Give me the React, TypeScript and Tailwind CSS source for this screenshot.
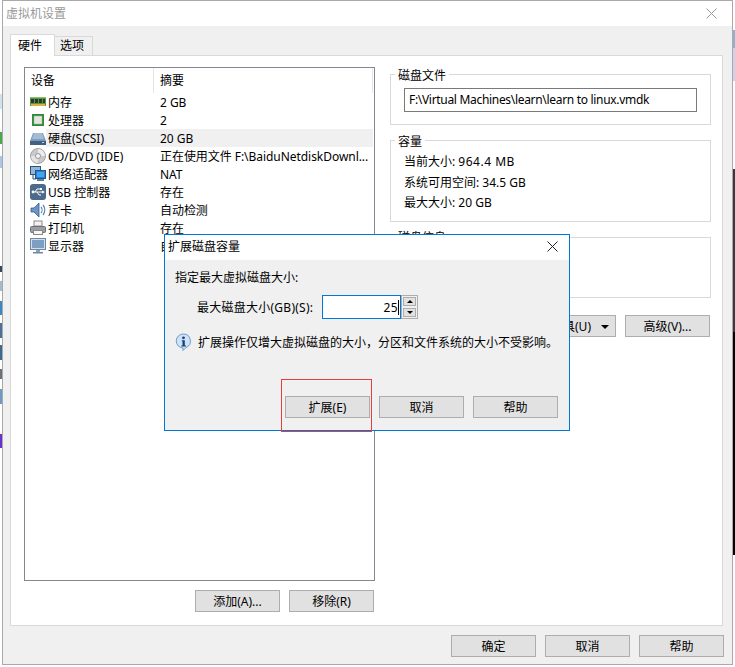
import React from 'react';

const MemoryIcon = () => (
  <svg width="16" height="16" viewBox="0 0 16 16">
    <rect x="0" y="3" width="16" height="9" fill="#4f9a3c" />
    <rect x="0" y="3" width="16" height="1" fill="#8cc46c" />
    <rect x="1" y="5" width="3" height="4" fill="#333" />
    <rect x="5" y="5" width="3" height="4" fill="#333" />
    <rect x="9" y="5" width="3" height="4" fill="#333" />
    <rect x="13" y="5" width="2" height="4" fill="#333" />
    <rect x="1" y="10" width="14" height="2" fill="#d8b340" />
  </svg>
);

const CpuIcon = () => (
  <svg width="16" height="16" viewBox="0 0 16 16">
    <rect x="2" y="2" width="12" height="12" fill="#2f8a3e" />
    <rect x="4" y="4" width="8" height="8" fill="#e4e6dc" stroke="#9fb59f" strokeWidth="0.5" />
  </svg>
);

const DiskIcon = () => (
  <svg width="16" height="16" viewBox="0 0 16 16">
    <path d="M3 3h10l3 8H0z" fill="#7d9cbc" />
    <path d="M4 3h8l2 6H2z" fill="#a3bbd3" />
    <rect x="0" y="11" width="16" height="4" fill="#3f5f83" />
    <rect x="12" y="12" width="2" height="1" fill="#b9d2ea" />
  </svg>
);

const CdIcon = () => (
  <svg width="16" height="16" viewBox="0 0 16 16">
    <circle cx="8" cy="8" r="7.5" fill="#c9c9c9" stroke="#a2a2a2" />
    <path d="M8 1a7 7 0 0 1 7 7H11a3 3 0 0 0-3-3z" fill="#ececec" />
    <path d="M8 15a7 7 0 0 1-7-7h4a3 3 0 0 0 3 3z" fill="#e4e4e4" />
    <circle cx="8" cy="8" r="2.5" fill="#f4f4f4" stroke="#9a9a9a" />
  </svg>
);

const NetworkIcon = () => (
  <svg width="16" height="16" viewBox="0 0 16 16">
    <rect x="0.5" y="0.5" width="10" height="8" fill="#8fb6dc" stroke="#2f5378" />
    <path d="M3 9v4h3" fill="none" stroke="#2f5378" />
    <rect x="5.5" y="4.5" width="10" height="8" fill="#1f84e0" stroke="#2f5378" />
    <rect x="7" y="6" width="7" height="5" fill="#42a5f0" />
    <rect x="7" y="13" width="7" height="2" fill="#5f7f9f" />
  </svg>
);

const UsbIcon = () => (
  <svg width="16" height="16" viewBox="0 0 16 16">
    <rect x="0" y="0" width="16" height="16" rx="3" fill="#4b6a8c" />
    <path d="M2 8h11M5 8l2-3h3M7 8l2 3h2" fill="none" stroke="#fff" strokeWidth="1" />
    <circle cx="3" cy="8" r="1.4" fill="#fff" />
    <path d="M12 6.5l3 1.5-3 1.5z" fill="#fff" />
    <rect x="10" y="4" width="2" height="2" fill="#fff" />
  </svg>
);

const SoundIcon = () => (
  <svg width="16" height="16" viewBox="0 0 16 16">
    <path d="M1 6h3l5-5v14l-5-5H1z" fill="#6f95c4" stroke="#2f5c92" strokeWidth="0.8" />
    <path d="M11 5c1.4 1.6 1.4 4.4 0 6M13 3c2.4 2.8 2.4 7.2 0 10" fill="none" stroke="#5b87bc" strokeWidth="1.2" />
  </svg>
);

const PrinterIcon = () => (
  <svg width="16" height="16" viewBox="0 0 16 16">
    <rect x="4" y="1" width="8" height="5" fill="#f2f2f2" stroke="#8a8a8a" />
    <rect x="0.5" y="6.5" width="15" height="6" rx="1" fill="#9a9ea4" stroke="#6d7076" />
    <rect x="3.5" y="10.5" width="9" height="4" fill="#f6f6f6" stroke="#8a8a8a" />
  </svg>
);

const MonitorIcon = () => (
  <svg width="16" height="16" viewBox="0 0 16 16">
    <rect x="0.5" y="0.5" width="15" height="11" fill="#d4dfeb" stroke="#6d89a6" />
    <rect x="2" y="2" width="12" height="8" fill="#7d9fc2" />
    <rect x="6" y="12" width="4" height="2" fill="#8ea3b8" />
    <rect x="3" y="14" width="10" height="1.5" fill="#6d89a6" />
  </svg>
);

const InfoIcon = () => (
  <svg width="17" height="18" viewBox="0 0 17 18">
    <path d="M8.5 1a7 7 0 0 1 2.5 13.5L8 17.5v-2.5A7 7 0 0 1 8.5 1z" fill="#cfe2f6" stroke="#6f9bcc" />
    <circle cx="8.5" cy="4.8" r="1.4" fill="#123f80" />
    <path d="M6.8 7.2h3v5.2H11v1.1H6.3v-1.1h1.2V8.3H6.8z" fill="#123f80" />
  </svg>
);

const devices = [
  { icon: <MemoryIcon />, name: '内存', summary: '2 GB' },
  { icon: <CpuIcon />, name: '处理器', summary: '2' },
  { icon: <DiskIcon />, name: '硬盘(SCSI)', summary: '20 GB', selected: true },
  { icon: <CdIcon />, name: 'CD/DVD (IDE)', summary: '正在使用文件 F:\\BaiduNetdiskDownl...' },
  { icon: <NetworkIcon />, name: '网络适配器', summary: 'NAT' },
  { icon: <UsbIcon />, name: 'USB 控制器', summary: '存在' },
  { icon: <SoundIcon />, name: '声卡', summary: '自动检测' },
  { icon: <PrinterIcon />, name: '打印机', summary: '存在' },
  { icon: <MonitorIcon />, name: '显示器', summary: '自动检测' },
];

const leftStrip = [
  'h-[95px] bg-white',
  'h-[16px] bg-[#cfe2f2]',
  'h-[23px] bg-white',
  'h-[12px] bg-[#4aa84a]',
  'h-[12px] bg-white',
  'h-[12px] bg-[#a8c8e8]',
  'h-[100px] bg-white',
  'h-[6px] bg-[#38485a]',
  'h-[9px] bg-white',
  'h-[10px] bg-[#a8b8c8]',
  'h-[11px] bg-white',
  'h-[14px] bg-[#3c86c4]',
  'h-[8px] bg-white',
  'h-[15px] bg-[#4c7098]',
  'h-[7px] bg-white',
  'h-[15px] bg-[#41688f]',
  'h-[10px] bg-white',
  'h-[10px] bg-[#6a7078]',
  'h-[10px] bg-white',
  'h-[15px] bg-[#6f9ac4]',
  'h-[30px] bg-white',
  'h-[15px] bg-[#6a2fd0]',
  'h-[222px] bg-white',
];

const rightStrip = [
  'h-[30px] bg-white',
  'h-[18px] bg-[#8fb0d0]',
  'h-[33px] bg-[#c8d4ec]',
  'h-[88px] bg-white',
  'h-[163px] bg-[#3a3a3a]',
  'h-[223px] bg-black',
  'h-[112px] bg-white',
];

const Btn: React.FC<{ children: React.ReactNode; className?: string }> = ({ children, className }) => (
  <button className={`h-[22px] w-[85px] border border-[#adadad] bg-[#e1e1e1] pt-px text-[12px] leading-[19px] text-black ${className ?? ''}`}>
    {children}
  </button>
);

const CloseX: React.FC<{ color: string }> = ({ color }) => (
  <svg width="11" height="11" viewBox="0 0 11 11">
    <path d="M0.5 0.5l10 10M10.5 0.5l-10 10" stroke={color} strokeWidth="1" fill="none" />
  </svg>
);

const App: React.FC = () => {
  return (
    <div className="relative flex h-[667px] w-[735px] overflow-hidden bg-white font-['Noto_Sans','Noto_Sans_CJK_SC',sans-serif] text-[12px] text-black">
      <div className="flex h-full w-[2px] flex-col">
        {leftStrip.map((cls, i) => (
          <div key={i} className={cls} />
        ))}
      </div>

      {/* main settings window */}
      <div className="flex h-[665px] w-[731px] flex-col border border-[#a9a9a9] bg-[#f0f0f0]">
        <div className="flex h-[25px] items-center justify-between bg-white pl-[3px] pr-[15px]">
          <span className="text-[12px] text-[#999999]">虚拟机设置</span>
          <CloseX color="#999999" />
        </div>

        <div className="ml-[7px] mt-[7px] flex h-[22px] items-end">
          <div className="relative z-10 -mb-px flex h-[22px] w-[45px] items-center border border-b-0 border-[#d9d9d9] bg-white pl-[7px]">
            硬件
          </div>
          <div className="flex h-[19px] w-[38px] items-center border border-l-0 border-b-0 border-[#d9d9d9] bg-[#f0f0f0] pl-[5px]">
            选项
          </div>
        </div>

        <div className="ml-[7px] flex h-[571px] w-[713px] border border-[#d9d9d9] bg-white pl-[13px] pt-[11px]">
          <div className="flex w-[351px] flex-col">
            <div className="flex h-[514px] flex-col border border-[#828790] bg-white">
              <div className="flex h-[25px] items-center">
                <span className="w-[128px] pl-[6px] pt-px">设备</span>
                <div className="flex h-full flex-1 items-center border-l border-[#e5e5e5] pl-[6px] pt-px">摘要</div>
                <div className="h-full w-[2px] border-l border-[#e5e5e5]" />
              </div>
              {devices.map((d) => (
                <div key={d.name} className="flex h-[18px] items-center">
                  <div className="flex w-[21px] shrink-0 justify-end">{d.icon}</div>
                  <div className={`mr-[1px] flex h-full flex-1 items-center pl-[2px] pt-px ${d.selected ? 'bg-[#f0f0f0]' : ''}`}>
                    <span className="w-[112px] whitespace-nowrap">{d.name}</span>
                    <span className="whitespace-nowrap tracking-[-0.05px]">{d.summary}</span>
                  </div>
                </div>
              ))}
            </div>
            <div className="mt-[9px] flex justify-end gap-[9px] pr-[1px]">
              <Btn>添加(A)...</Btn>
              <Btn>移除(R)</Btn>
            </div>
          </div>

          <div className="ml-[15px] flex w-[321px] flex-col pt-[7px]">
            <div className="h-[51px] border border-[#d9d9d9]">
              <div className="-mt-[8px] ml-[4px] h-[16px] w-fit bg-white px-[3px] leading-[18px]">磁盘文件</div>
              <div className="ml-[13px] mt-[5px] flex h-[24px] w-[293px] items-center border border-[#7a7a7a] pb-px pl-[4px] tracking-[-0.31px]">
                F:\Virtual Machines\learn\learn to linux.vmdk
              </div>
            </div>

            <div className="mt-[15px] h-[82px] border border-[#d9d9d9]">
              <div className="-mt-[8px] ml-[4px] h-[16px] w-fit bg-white px-[3px] leading-[18px]">容量</div>
              <div className="ml-[13px] mt-[3px] flex flex-col leading-[20.5px]">
                <span>
                  当前大小: <span className="tracking-[0.5px]">964.4 MB</span>
                </span>
                <span>系统可用空间: 34.5 GB</span>
                <span>最大大小: 20 GB</span>
              </div>
            </div>

            <div className="mt-[15px] h-[61px] border border-[#d9d9d9]">
              <div className="-mt-[8px] ml-[4px] h-[16px] w-fit bg-white px-[3px] leading-[16px]">磁盘信息</div>
            </div>

            <div className="mt-[17px] flex justify-end gap-[9px] pr-[1px]">
              <Btn>
                <span className="flex items-center justify-end gap-[10px] whitespace-nowrap pr-[6px]">
                  <span className="shrink-0">实用工具(U)</span>
                  <span className="h-0 w-0 shrink-0 border-x-[4px] border-t-[4px] border-x-transparent border-t-black" />
                </span>
              </Btn>
              <Btn>高级(V)...</Btn>
            </div>
          </div>
        </div>

        <div className="mt-[9px] flex justify-end gap-[9px] pr-[8px]">
          <Btn>确定</Btn>
          <Btn>取消</Btn>
          <Btn>帮助</Btn>
        </div>
      </div>

      <div className="flex h-full w-[2px] flex-col">
        {rightStrip.map((cls, i) => (
          <div key={i} className={cls} />
        ))}
      </div>

      {/* expand disk dialog */}
      <div className="absolute left-[164px] top-[234px] flex h-[197px] w-[406px] flex-col border border-[#0078d7] bg-[#f0f0f0]">
        <div className="flex h-[25px] items-center justify-between bg-white pb-[2px] pl-[3px] pr-[11px]">
          <span>扩展磁盘容量</span>
          <CloseX color="#222222" />
        </div>
        <div className="flex flex-1 flex-col pl-[10px] pr-[11px] pt-[10px]">
          <div className="leading-[16px]">指定最大虚拟磁盘大小:</div>
          <div className="ml-[22px] mt-[9px] flex h-[24px] items-center">
            <span className="w-[125px] whitespace-nowrap pt-[2px] tracking-[0.25px]">最大磁盘大小(GB)(S):</span>
            <div className="flex h-[24px] w-[79px] items-center justify-end border border-[#0078d7] bg-white pr-[1px] pt-px">
              <span className="leading-[16px] tracking-[0.4px]">25</span>
              <span className="h-[15px] w-px bg-black" />
            </div>
            <div className="flex h-[24px] w-[17px] flex-col justify-between border border-[#adadad] bg-[#f0f0f0] p-px">
              <div className="flex h-[9px] items-center justify-center border border-[#adadad] bg-[#e1e1e1]">
                <span className="h-0 w-0 border-x-[3px] border-b-[3px] border-x-transparent border-b-black" />
              </div>
              <div className="flex h-[9px] items-center justify-center border border-[#adadad] bg-[#e1e1e1]">
                <span className="h-0 w-0 border-x-[3px] border-t-[3px] border-x-transparent border-t-black" />
              </div>
            </div>
          </div>
          <div className="mt-[14px] flex h-[18px] items-center">
            <div className="w-[23px] shrink-0">
              <InfoIcon />
            </div>
            <span className="whitespace-nowrap pt-[2px]">扩展操作仅增大虚拟磁盘的大小，分区和文件系统的大小不受影响。</span>
          </div>
          <div className="mt-auto flex justify-end gap-[9px] pb-[12px]">
            <Btn>扩展(E)</Btn>
            <Btn>取消</Btn>
            <Btn>帮助</Btn>
          </div>
        </div>
      </div>

      {/* annotation box drawn over the screenshot */}
      <div className="absolute left-[281px] top-[379px] h-[53px] w-[91px] border border-[#e53e3e]" />
    </div>
  );
};

export default App;
